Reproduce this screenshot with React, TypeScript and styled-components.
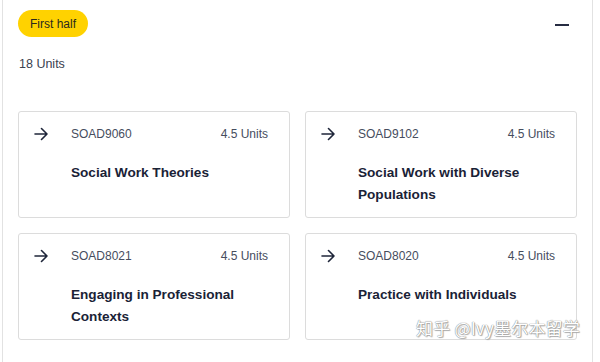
import React from "react";
import styled, { createGlobalStyle } from "styled-components";

const Global = createGlobalStyle`
  html, body { margin: 0; padding: 0; background: #ffffff; }
  body { font-family: "Liberation Sans", Arial, sans-serif; }
`;

const Page = styled.div`
  position: relative;
  width: 600px;
  height: 362px;
  overflow: hidden;
  background: #fff;
`;

const Panel = styled.section`
  margin-left: 2px;
  width: 591px;
  height: 362px;
  box-sizing: border-box;
  border-left: 1px solid #e2e2e2;
  border-right: 1px solid #e2e2e2;
  padding: 10px 16px 0 15px;
`;

const Header = styled.div`
  display: flex;
  align-items: center;
  justify-content: space-between;
`;

const Badge = styled.span`
  display: inline-flex;
  align-items: center;
  height: 27px;
  padding: 0 12px;
  border-radius: 14px;
  background: #ffd200;
  color: #2b2a1e;
  font-size: 12px;
`;

const Collapse = styled.button`
  width: 24px;
  height: 24px;
  margin: 3px 2px 0 0;
  padding: 0;
  border: 0;
  background: transparent;
  display: flex;
  align-items: center;
  justify-content: center;
  &::before {
    content: "";
    display: block;
    width: 14px;
    height: 2px;
    background: #262c42;
  }
`;

const Total = styled.div`
  margin-top: 19px;
  padding-left: 1px;
  color: #3a4150;
  font-size: 12.5px;
  line-height: 16px;
`;

const Grid = styled.div`
  margin-top: 39px;
  display: grid;
  grid-template-columns: 272px 272px;
  column-gap: 15px;
  row-gap: 15px;
`;

const Card = styled.a`
  display: grid;
  grid-template-columns: 37px 1fr;
  box-sizing: border-box;
  min-height: 107px;
  padding: 14px 21px 10px 15px;
  border: 1px solid #dcdcdc;
  border-radius: 3px;
  background: #fff;
  text-decoration: none;
  color: inherit;
`;

const Arrow = styled.svg`
  width: 14px;
  height: 14px;
  margin-top: 1px;
  color: #1f263a;
`;

const Body = styled.div`
  display: flex;
  flex-direction: column;
`;

const Meta = styled.div`
  display: flex;
  justify-content: space-between;
  font-size: 12px;
  line-height: 16px;
  color: #464d5e;
`;

const Title = styled.div`
  margin-top: 20px;
  font-size: 13.6px;
  font-weight: 700;
  line-height: 22px;
  color: #1a2236;
`;

const Watermark = styled.div`
  position: absolute;
  left: 416px;
  top: 315px;
  font-family: "Noto Sans CJK SC", "Liberation Sans", sans-serif;
  font-size: 17px;
  letter-spacing: 0.2px;
  color: #ffffff;
  text-shadow: 0 0 1px #8c8c8c, 0 0 1px #8c8c8c, 1px 1px 1px #b0b0b0;
  white-space: nowrap;
`;

const courses = [
  { code: "SOAD9060", title: "Social Work Theories" },
  { code: "SOAD9102", title: "Social Work with Diverse Populations" },
  { code: "SOAD8021", title: "Engaging in Professional Contexts" },
  { code: "SOAD8020", title: "Practice with Individuals" },
];

export default function App() {
  return (
    <Page>
      <Global />
      <Panel>
        <Header>
          <Badge>First half</Badge>
          <Collapse aria-label="Collapse" />
        </Header>
        <Total>18 Units</Total>
        <Grid>
          {courses.map((c) => (
            <Card key={c.code} href="#">
              <Arrow viewBox="0 0 14 14" fill="none" stroke="currentColor" strokeWidth="1.6" strokeLinecap="round" strokeLinejoin="round">
                <path d="M1 7h12M7.5 1.5L13 7l-5.5 5.5" />
              </Arrow>
              <Body>
                <Meta>
                  <span>{c.code}</span>
                  <span>4.5 Units</span>
                </Meta>
                <Title>{c.title}</Title>
              </Body>
            </Card>
          ))}
        </Grid>
      </Panel>
      <Watermark>知乎 @Ivy墨尔本留学</Watermark>
    </Page>
  );
}
